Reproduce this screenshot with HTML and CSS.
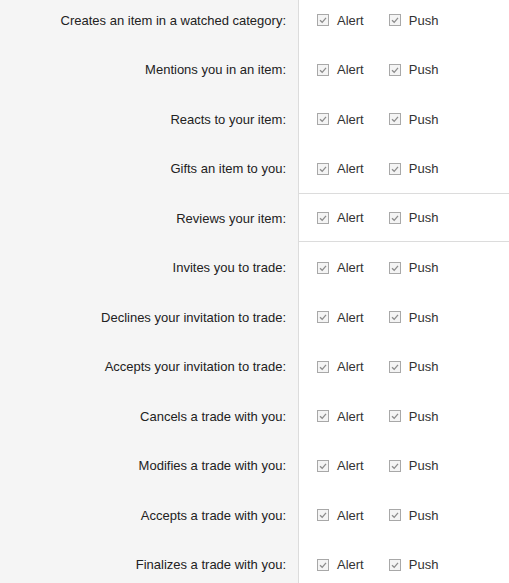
FILE: index.html
```html
<!DOCTYPE html>
<html>
  <head>
    <title>Notification settings</title>
    <link rel="stylesheet" href="styles.css">
  </head>
  <body>
    <div class="prefs">
      <div class="row">
        <div class="label">Creates an item in a watched category:</div>
        <div class="opts">
          <label class="opt"><span class="box"><svg viewBox="0 0 10 10"><path d="M2 5.2 L4.2 7.3 L8 2.8"/></svg></span>Alert</label>
          <label class="opt"><span class="box"><svg viewBox="0 0 10 10"><path d="M2 5.2 L4.2 7.3 L8 2.8"/></svg></span>Push</label>
        </div>
      </div>
      <div class="row">
        <div class="label">Mentions you in an item:</div>
        <div class="opts">
          <label class="opt"><span class="box"><svg viewBox="0 0 10 10"><path d="M2 5.2 L4.2 7.3 L8 2.8"/></svg></span>Alert</label>
          <label class="opt"><span class="box"><svg viewBox="0 0 10 10"><path d="M2 5.2 L4.2 7.3 L8 2.8"/></svg></span>Push</label>
        </div>
      </div>
      <div class="row">
        <div class="label">Reacts to your item:</div>
        <div class="opts">
          <label class="opt"><span class="box"><svg viewBox="0 0 10 10"><path d="M2 5.2 L4.2 7.3 L8 2.8"/></svg></span>Alert</label>
          <label class="opt"><span class="box"><svg viewBox="0 0 10 10"><path d="M2 5.2 L4.2 7.3 L8 2.8"/></svg></span>Push</label>
        </div>
      </div>
      <div class="row">
        <div class="label">Gifts an item to you:</div>
        <div class="opts">
          <label class="opt"><span class="box"><svg viewBox="0 0 10 10"><path d="M2 5.2 L4.2 7.3 L8 2.8"/></svg></span>Alert</label>
          <label class="opt"><span class="box"><svg viewBox="0 0 10 10"><path d="M2 5.2 L4.2 7.3 L8 2.8"/></svg></span>Push</label>
        </div>
      </div>
      <div class="row">
        <div class="label">Reviews your item:</div>
        <div class="opts hover">
          <label class="opt"><span class="box"><svg viewBox="0 0 10 10"><path d="M2 5.2 L4.2 7.3 L8 2.8"/></svg></span>Alert</label>
          <label class="opt"><span class="box"><svg viewBox="0 0 10 10"><path d="M2 5.2 L4.2 7.3 L8 2.8"/></svg></span>Push</label>
        </div>
      </div>
      <div class="row">
        <div class="label">Invites you to trade:</div>
        <div class="opts">
          <label class="opt"><span class="box"><svg viewBox="0 0 10 10"><path d="M2 5.2 L4.2 7.3 L8 2.8"/></svg></span>Alert</label>
          <label class="opt"><span class="box"><svg viewBox="0 0 10 10"><path d="M2 5.2 L4.2 7.3 L8 2.8"/></svg></span>Push</label>
        </div>
      </div>
      <div class="row">
        <div class="label">Declines your invitation to trade:</div>
        <div class="opts">
          <label class="opt"><span class="box"><svg viewBox="0 0 10 10"><path d="M2 5.2 L4.2 7.3 L8 2.8"/></svg></span>Alert</label>
          <label class="opt"><span class="box"><svg viewBox="0 0 10 10"><path d="M2 5.2 L4.2 7.3 L8 2.8"/></svg></span>Push</label>
        </div>
      </div>
      <div class="row">
        <div class="label">Accepts your invitation to trade:</div>
        <div class="opts">
          <label class="opt"><span class="box"><svg viewBox="0 0 10 10"><path d="M2 5.2 L4.2 7.3 L8 2.8"/></svg></span>Alert</label>
          <label class="opt"><span class="box"><svg viewBox="0 0 10 10"><path d="M2 5.2 L4.2 7.3 L8 2.8"/></svg></span>Push</label>
        </div>
      </div>
      <div class="row">
        <div class="label">Cancels a trade with you:</div>
        <div class="opts">
          <label class="opt"><span class="box"><svg viewBox="0 0 10 10"><path d="M2 5.2 L4.2 7.3 L8 2.8"/></svg></span>Alert</label>
          <label class="opt"><span class="box"><svg viewBox="0 0 10 10"><path d="M2 5.2 L4.2 7.3 L8 2.8"/></svg></span>Push</label>
        </div>
      </div>
      <div class="row">
        <div class="label">Modifies a trade with you:</div>
        <div class="opts">
          <label class="opt"><span class="box"><svg viewBox="0 0 10 10"><path d="M2 5.2 L4.2 7.3 L8 2.8"/></svg></span>Alert</label>
          <label class="opt"><span class="box"><svg viewBox="0 0 10 10"><path d="M2 5.2 L4.2 7.3 L8 2.8"/></svg></span>Push</label>
        </div>
      </div>
      <div class="row">
        <div class="label">Accepts a trade with you:</div>
        <div class="opts">
          <label class="opt"><span class="box"><svg viewBox="0 0 10 10"><path d="M2 5.2 L4.2 7.3 L8 2.8"/></svg></span>Alert</label>
          <label class="opt"><span class="box"><svg viewBox="0 0 10 10"><path d="M2 5.2 L4.2 7.3 L8 2.8"/></svg></span>Push</label>
        </div>
      </div>
      <div class="row">
        <div class="label">Finalizes a trade with you:</div>
        <div class="opts">
          <label class="opt"><span class="box"><svg viewBox="0 0 10 10"><path d="M2 5.2 L4.2 7.3 L8 2.8"/></svg></span>Alert</label>
          <label class="opt"><span class="box"><svg viewBox="0 0 10 10"><path d="M2 5.2 L4.2 7.3 L8 2.8"/></svg></span>Push</label>
        </div>
      </div>
    </div>
  </body>
</html>
```

FILE: styles.css
```css
html, body {
  margin: 0;
  padding: 0;
  background: #ffffff;
  overflow: hidden;
}

body {
  font-family: "Liberation Sans", Arial, sans-serif;
  font-size: 13px;
  color: #222222;
}

.prefs {
  margin-top: -5.5px;
}

.row {
  display: flex;
  height: 49.5px;
}

.label {
  width: 286px;
  padding-right: 12px;
  padding-top: 2px;
  background: #f5f5f5;
  border-right: 1px solid #dcdcdc;
  display: flex;
  align-items: center;
  justify-content: flex-end;
}

.opts {
  flex: 1;
  display: flex;
  align-items: center;
  padding-left: 18px;
  padding-top: 2px;
  gap: 25px;
  box-sizing: border-box;
}

.opts.hover {
  border-top: 1px solid #dcdcdc;
  border-bottom: 1px solid #dcdcdc;
  padding-top: 1px;
}

.opt {
  display: flex;
  align-items: center;
  color: #333333;
}

.box {
  width: 10px;
  height: 10px;
  border: 1px solid #a8a8a8;
  background: #f4f4f4;
  margin-right: 8px;
  display: flex;
}

.box svg {
  width: 10px;
  height: 10px;
  fill: none;
  stroke: #8c8c8c;
  stroke-width: 1.3;
}
```
